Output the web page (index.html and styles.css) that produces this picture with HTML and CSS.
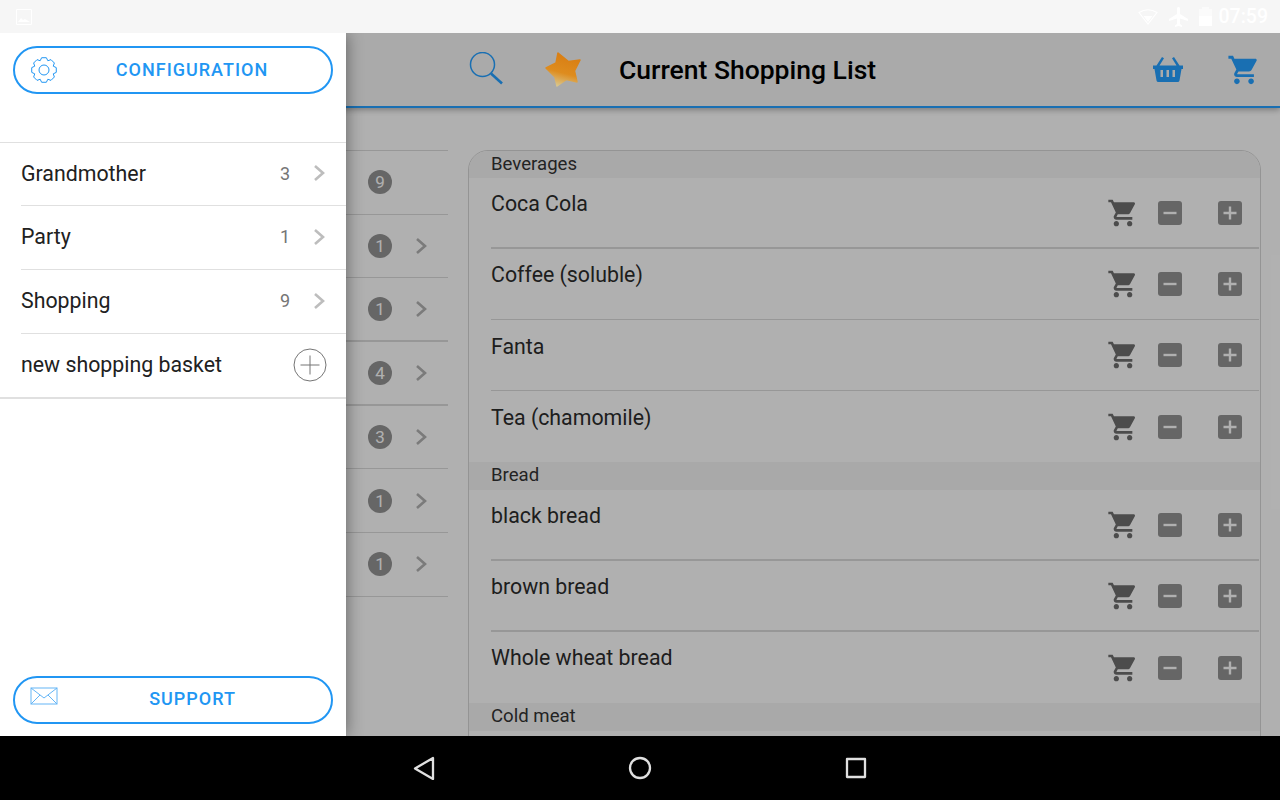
FILE: index.html
```html
<!DOCTYPE html>
<html lang="en">
<head>
    <meta charset="UTF-8">
    <title>Current Shopping List</title>
    <link rel="stylesheet" href="styles.css">
</head>
<body>
    <svg class="defs" width="0" height="0">
        <symbol id="cart" viewBox="0 0 24 24">
            <path d="M7 18c-1.1 0-1.99.9-1.99 2S5.9 22 7 22s2-.9 2-2-.9-2-2-2zM1 2v2h2l3.6 7.59-1.35 2.45c-.16.28-.25.61-.25.96 0 1.1.9 2 2 2h12v-2H7.42c-.14 0-.25-.11-.25-.25l.03-.12.9-1.63h7.45c.75 0 1.41-.41 1.75-1.03l3.58-6.49c.08-.14.12-.31.12-.48 0-.55-.45-1-1-1H5.21l-.94-2H1zm16 16c-1.1 0-1.99.9-1.99 2s.89 2 1.99 2 2-.9 2-2-.9-2-2-2z"/>
        </symbol>
        <symbol id="minus" viewBox="0 0 24 24">
            <rect width="24" height="24" rx="3"/>
            <rect x="5.500" y="10.800" width="13" height="2.400" fill="#fdfdfd"/>
        </symbol>
        <symbol id="plus" viewBox="0 0 24 24">
            <rect width="24" height="24" rx="3"/>
            <path d="M5.500 10.800h5.300V5.500h2.400v5.300h5.300v2.400h-5.300v5.300h-2.400v-5.300H5.500z" fill="#fdfdfd"/>
        </symbol>
        <symbol id="chev" viewBox="0 0 12 18">
            <path d="M2 2l8 7-8 7" fill="none" stroke="currentColor" stroke-width="2.600"/>
        </symbol>
    </svg>

    <div class="screen">
        <div class="status">
            <svg class="st-img" viewBox="0 0 16 16"><path d="M.5.5h15v15H.5z" fill="none" stroke="#fff"/><path d="M2 13l3-4 2 2 2-1 5 3z" fill="#fff"/></svg>
            <svg class="st-wifi" viewBox="0 0 20 16"><path d="M1 3.500Q10-2 19 3.500L10 15z" fill="none" stroke="#fff" stroke-width="1.200"/><path d="M5.500 7h9L10 13z" fill="#fff"/></svg>
            <svg class="st-plane" viewBox="0 0 24 24"><path fill="#fff" d="M21 16v-2l-8-5V3.500c0-.83-.67-1.500-1.500-1.500S10 2.670 10 3.500V9l-8 5v2l8-2.500V19l-2 1.500V22l3.500-1 3.500 1v-1.500L13 19v-5.500l8 2.500z"/></svg>
            <svg class="st-batt" viewBox="0 0 13 19"><path d="M3 2V0h7v2h3v17H0V2z" fill="#fff" opacity=".55"/><path d="M0 9h13v10H0z" fill="#fff"/></svg>
            <span class="st-time">07:59</span>
        </div>

        <div class="app">
            <div class="topbar">
                <svg class="search" viewBox="0 0 34 34"><circle cx="13.500" cy="12.500" r="12" fill="none" stroke="#259fff" stroke-width="1.500"/><path d="M22 21.500l11 10" stroke="#259fff" stroke-width="2.600"/></svg>
                <svg class="star" viewBox="0 0 40 40">
                    <defs>
                        <linearGradient id="gold" x1="0.6" y1="0.1" x2="0.35" y2="1">
                            <stop offset="0" stop-color="#d97f14"/>
                            <stop offset="0.55" stop-color="#de8c1e"/>
                            <stop offset="1" stop-color="#d9c68c"/>
                        </linearGradient>
                    </defs>
                    <path d="M14 3L24.500 11.500 36 10 30.500 21 33 32 22.500 29.500 13 36 11 27 2 18 12 13z" fill="url(#gold)" stroke="url(#gold)" stroke-width="1.500" stroke-linejoin="round"/>
                </svg>
                <h1 class="title">Current Shopping List</h1>
                <svg class="basket" viewBox="0 0 30 25"><path fill-rule="evenodd" fill="#259fff" d="M9 0l2 1.200L6.500 8.500h17L19 1.200 21 0l5.500 8.500H30V12h-1.500l-2 11.500q-.2 1.500-2 1.500h-19q-1.800 0-2-1.500L1.500 12H0V8.500h3.500zM7.500 13v7H10v-7zM13.500 13v7H16v-7zM19.500 13v7H22v-7z"/></svg>
                <svg class="topcart"><use href="#cart"/></svg>
            </div>

            <div class="content">
                <div class="baskets">
                    <div class="bk-row"><span class="badge">9</span><svg class="bk-chev hidden"><use href="#chev"/></svg></div>
                    <div class="bk-row"><span class="badge">1</span><svg class="bk-chev"><use href="#chev"/></svg></div>
                    <div class="bk-row thick"><span class="badge">1</span><svg class="bk-chev"><use href="#chev"/></svg></div>
                    <div class="bk-row thick"><span class="badge">4</span><svg class="bk-chev"><use href="#chev"/></svg></div>
                    <div class="bk-row"><span class="badge">3</span><svg class="bk-chev"><use href="#chev"/></svg></div>
                    <div class="bk-row"><span class="badge">1</span><svg class="bk-chev"><use href="#chev"/></svg></div>
                    <div class="bk-row"><span class="badge">1</span><svg class="bk-chev"><use href="#chev"/></svg></div>
                </div>

                <div class="card">
                    <div class="cat">Beverages</div>
                    <div class="group">
                        <div class="item thick"><span class="name">Coca Cola</span><div class="acts"><svg class="i-cart"><use href="#cart"/></svg><svg class="i-btn"><use href="#minus"/></svg><svg class="i-btn"><use href="#plus"/></svg></div></div>
                        <div class="item"><span class="name">Coffee (soluble)</span><div class="acts"><svg class="i-cart"><use href="#cart"/></svg><svg class="i-btn"><use href="#minus"/></svg><svg class="i-btn"><use href="#plus"/></svg></div></div>
                        <div class="item low"><span class="name">Fanta</span><div class="acts"><svg class="i-cart"><use href="#cart"/></svg><svg class="i-btn"><use href="#minus"/></svg><svg class="i-btn"><use href="#plus"/></svg></div></div>
                        <div class="item low"><span class="name">Tea (chamomile)</span><div class="acts"><svg class="i-cart"><use href="#cart"/></svg><svg class="i-btn"><use href="#minus"/></svg><svg class="i-btn"><use href="#plus"/></svg></div></div>
                    </div>
                    <div class="cat">Bread</div>
                    <div class="group">
                        <div class="item thick"><span class="name">black bread</span><div class="acts"><svg class="i-cart"><use href="#cart"/></svg><svg class="i-btn"><use href="#minus"/></svg><svg class="i-btn"><use href="#plus"/></svg></div></div>
                        <div class="item thick"><span class="name">brown bread</span><div class="acts"><svg class="i-cart"><use href="#cart"/></svg><svg class="i-btn"><use href="#minus"/></svg><svg class="i-btn"><use href="#plus"/></svg></div></div>
                        <div class="item"><span class="name">Whole wheat bread</span><div class="acts"><svg class="i-cart"><use href="#cart"/></svg><svg class="i-btn"><use href="#minus"/></svg><svg class="i-btn"><use href="#plus"/></svg></div></div>
                    </div>
                    <div class="cat">Cold meat</div>
                </div>
            </div>

            <div class="dim"></div>

            <div class="drawer">
                <a class="pill pill-top">
                    <svg class="pill-gear" viewBox="0 0 26 26" fill="none" stroke="#2196f3"><polygon stroke-linejoin="round" points="25.27,15.39 22.24,16.83 23.36,19.99 19.99,23.36 16.83,22.24 15.39,25.27 10.61,25.27 9.17,22.24 6.01,23.36 2.64,19.99 3.76,16.83 0.73,15.39 0.73,10.61 3.76,9.17 2.64,6.01 6.01,2.64 9.17,3.76 10.61,0.73 15.39,0.73 16.83,3.76 19.99,2.64 23.36,6.01 22.24,9.17 25.27,10.61"/><circle cx="13" cy="13" r="5"/></svg>
                    <span class="pill-label">CONFIGURATION</span>
                </a>
                <ul class="menu">
                    <li class="menu-row"><span class="menu-name">Grandmother</span><span class="menu-count">3</span><svg class="menu-chev"><use href="#chev"/></svg></li>
                    <li class="menu-row"><span class="menu-name">Party</span><span class="menu-count">1</span><svg class="menu-chev"><use href="#chev"/></svg></li>
                    <li class="menu-row"><span class="menu-name">Shopping</span><span class="menu-count">9</span><svg class="menu-chev"><use href="#chev"/></svg></li>
                    <li class="menu-row"><span class="menu-name">new shopping basket</span><svg class="menu-add" viewBox="0 0 34 34" fill="none" stroke="#757575"><circle cx="17" cy="17" r="16"/><path d="M17 7.500v19M7.500 17h19"/></svg></li>
                </ul>
                <a class="pill pill-bottom">
                    <svg class="pill-mail" viewBox="0 0 28 18" fill="none" stroke="#64b5f6"><rect x="1" y="1" width="26" height="16"/><path d="M1 1l13 10L27 1M1 17l9-9M27 17l-9-9"/></svg>
                    <span class="pill-label">SUPPORT</span>
                </a>
            </div>
        </div>

        <div class="nav">
            <svg class="nav-ico" viewBox="0 0 24 24" fill="none" stroke="#e0e0e0" stroke-width="2.300" stroke-linejoin="round"><path d="M21 2v21L3 12.500z"/></svg>
            <svg class="nav-ico" viewBox="0 0 24 24" fill="none" stroke="#e0e0e0" stroke-width="2.300"><circle cx="12" cy="12" r="10"/></svg>
            <svg class="nav-ico" viewBox="0 0 24 24" fill="none" stroke="#e0e0e0" stroke-width="2.300" stroke-linejoin="round"><rect x="3" y="3" width="18" height="18"/></svg>
        </div>
    </div>
</body>
</html>
```
FILE: styles.css
```css
*{
    margin:0;
    padding:0;
    list-style:none;
    box-sizing:border-box;
}
body{
    font-family:Roboto,"Liberation Sans",sans-serif;
    background:#000;
}
.defs{
    position:absolute;
}
.screen{
    width:1280px;
    height:800px;
    display:flex;
    flex-direction:column;
    overflow:hidden;
}

/* status bar */
.status{
    height:33px;
    flex:none;
    background:#f6f6f6;
    display:flex;
    align-items:center;
    padding:0 12px 0 16px;
}
.st-img{
    width:16px;
    height:16px;
    margin-right:auto;
}
.st-wifi{
    width:20px;
    height:16px;
}
.st-plane{
    width:24px;
    height:24px;
    margin-left:9px;
}
.st-batt{
    width:13px;
    height:19px;
    margin-left:8px;
}
.st-time{
    margin-left:7px;
    color:#fff;
    font-size:19.5px;
    font-weight:500;
}

/* app area */
.app{
    flex:1;
    position:relative;
    background:#fdfdfd;
    overflow:hidden;
}
.topbar{
    height:75px;
    background:#f4f4f4;
    border-bottom:2px solid #259fff;
    box-shadow:0 2px 6px rgba(0,0,0,.3);
    display:flex;
    align-items:center;
    padding:0 19px 0 469px;
}
.search{
    width:34px;
    height:34px;
    margin-top:-1px;
}
.star{
    position:relative;
    z-index:1;
    width:40px;
    height:40px;
    margin-left:41px;
}
.title{
    margin-left:35px;
    font-size:26.5px;
    font-weight:500;
    color:#000;
}
.basket{
    width:30px;
    height:25px;
    margin-left:auto;
}
.topcart{
    width:34px;
    height:34px;
    margin-left:44px;
    fill:#259fff;
}

.content{
    display:flex;
    padding-top:42px;
}
.baskets{
    width:448px;
    flex:none;
    border-top:1px solid #d8d8d8;
}
.bk-row{
    height:63.7px;
    border-bottom:1px solid #d8d8d8;
    display:flex;
    align-items:center;
    justify-content:flex-end;
    padding-right:21px;
}
.bk-row.thick{
    border-bottom-width:2px;
}
.badge{
    width:24px;
    height:24px;
    border-radius:50%;
    background:#929292;
    color:#fdfdfd;
    font-size:17px;
    display:flex;
    align-items:center;
    justify-content:center;
}
.bk-chev{
    width:12px;
    height:18px;
    margin-left:23px;
    color:#b0b0b0;
}
.hidden{
    visibility:hidden;
}

.card{
    width:793px;
    margin-left:20px;
    border:1px solid #d4d4d4;
    border-radius:20px 20px 0 0;
    overflow:hidden;
    height:620px;
}
.cat{
    height:27px;
    background:#f3f3f3;
    padding-left:22px;
    font-size:18.6px;
    color:#333;
    line-height:27px;
}
.group + .cat{
    height:28px;
}
.group{
    padding-left:22px;
    padding-right:1px;
}
.item{
    height:71px;
    border-bottom:1px solid #d8d8d8;
    display:flex;
    align-items:center;
    justify-content:space-between;
}
.item.thick{
    border-bottom-width:2px;
}
.item:last-child{
    border-bottom:none;
}
.name{
    align-self:flex-start;
    margin-top:13px;
    font-size:21.33px;
    color:#2c2c2c;
}
.low .name{
    margin-top:14px;
}
.acts{
    display:flex;
    align-items:center;
    padding-right:17px;
}
.i-cart{
    width:32px;
    height:32px;
    fill:#6e6e6e;
}
.i-btn{
    width:24px;
    height:24px;
    fill:#929292;
    margin-left:36px;
}
.i-cart + .i-btn{
    margin-left:19px;
}

.dim{
    position:absolute;
    top:0;
    right:0;
    bottom:0;
    left:0;
    background:rgba(0,0,0,.3);
}

/* side drawer */
.drawer{
    position:absolute;
    z-index:2;
    top:0;
    left:0;
    bottom:0;
    width:346px;
    background:#fff;
    box-shadow:0 0 16px rgba(0,0,0,.45);
    display:flex;
    flex-direction:column;
    padding-top:13px;
}
.pill{
    width:320px;
    height:48px;
    margin-left:13px;
    border:2px solid #2196f3;
    border-radius:24px;
    display:flex;
    align-items:center;
    flex:none;
}
.pill-bottom{
    margin-top:auto;
    margin-bottom:12px;
}
.pill-gear{
    width:26px;
    height:26px;
    margin-left:16px;
}
.pill-mail{
    width:28px;
    height:18px;
    margin-left:15px;
    margin-top:-9px;
}
.pill-label{
    flex:1;
    text-align:center;
    padding:0 4px 2px 0;
    color:#2196f3;
    font-size:18px;
    font-weight:500;
    letter-spacing:1px;
}
.pill-bottom .pill-label{
    padding-bottom:4px;
}
.menu{
    margin-top:48px;
    border-top:1px solid #e0e0e0;
    border-bottom:2px solid #e0e0e0;
}
.menu-row{
    height:64px;
    margin-left:21px;
    padding:0 21px 2px 0;
    display:flex;
    align-items:center;
    border-bottom:1px solid #e0e0e0;
}
.menu-row:first-child{
    height:63px;
}
.menu-row:last-child{
    height:63px;
    border-bottom:none;
}
.menu-name{
    flex:1;
    font-size:21.33px;
    color:#212121;
}
.menu-count{
    font-size:18px;
    color:#757575;
    margin-right:23px;
}
.menu-chev{
    width:12px;
    height:18px;
    color:#bdbdbd;
}
.menu-add{
    width:34px;
    height:34px;
    margin-right:-2px;
}

/* android nav bar */
.nav{
    height:64px;
    flex:none;
    background:#000;
    display:flex;
    align-items:center;
    justify-content:center;
    gap:192px;
}
.nav-ico{
    width:24px;
    height:24px;
}
```
